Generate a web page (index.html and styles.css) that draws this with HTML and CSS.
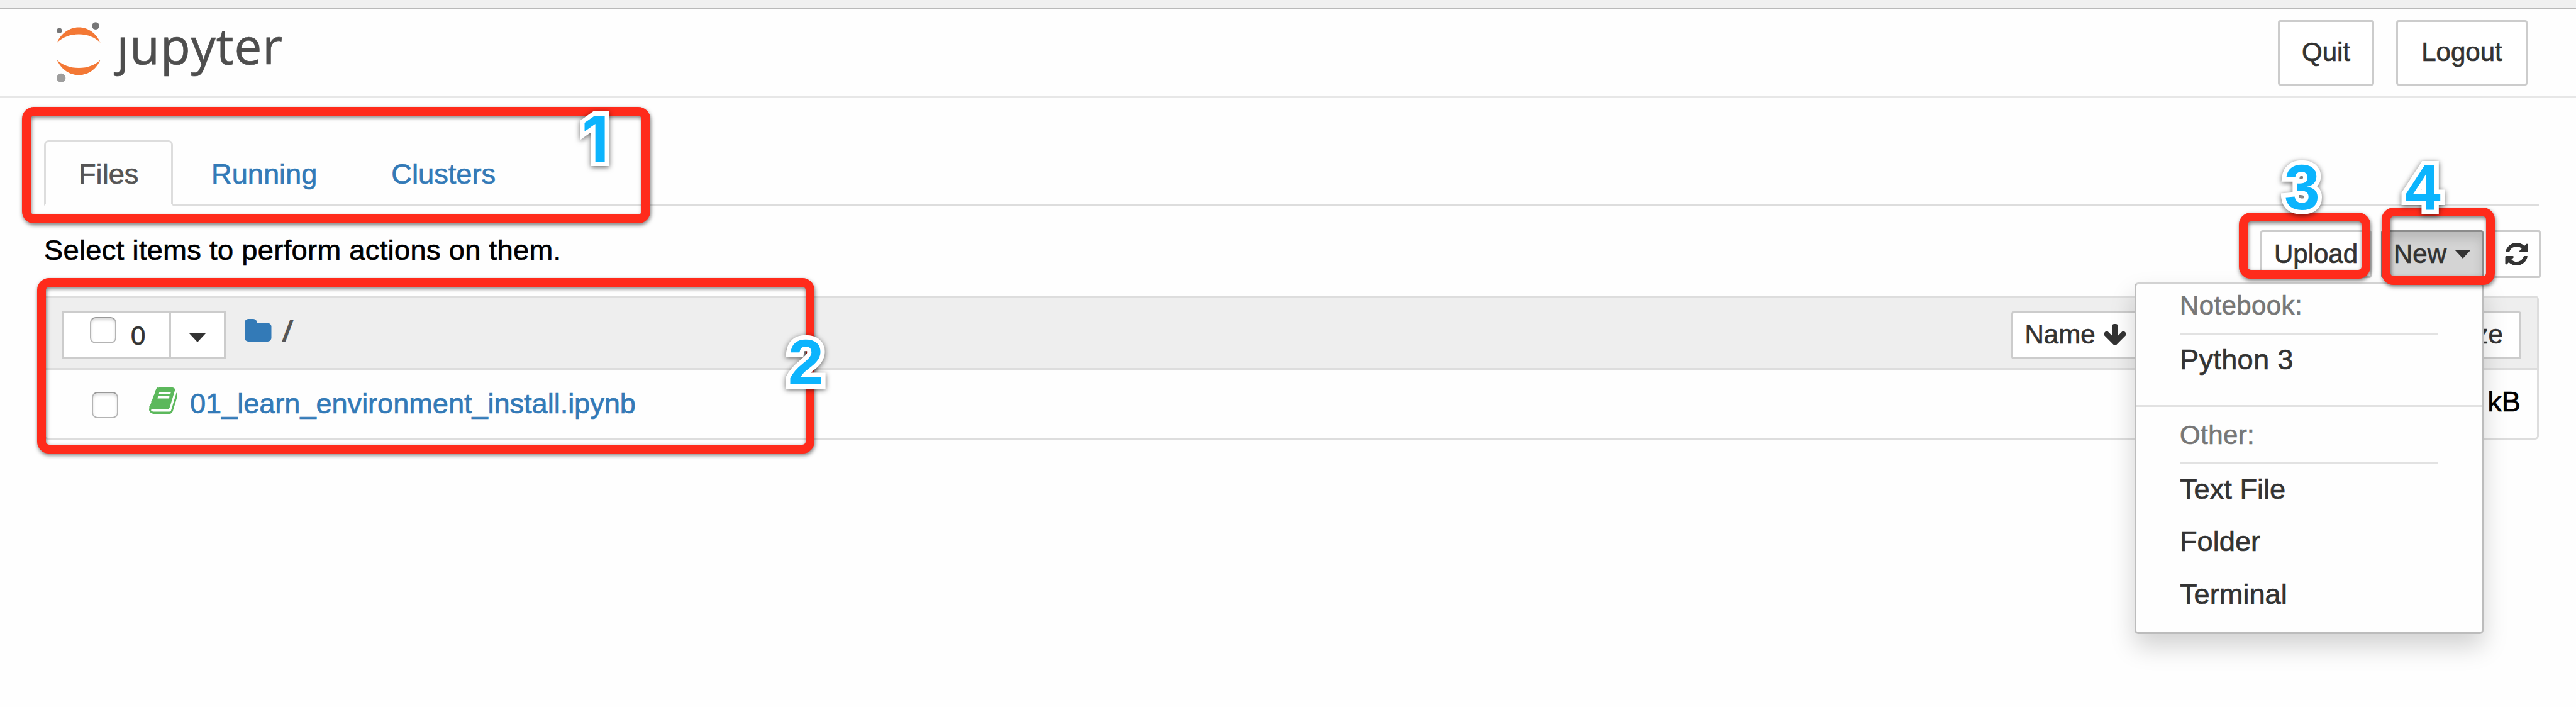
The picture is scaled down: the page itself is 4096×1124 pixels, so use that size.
FILE: index.html
```html
<!DOCTYPE html>
<html lang="en">
<head>
<meta charset="utf-8">
<title>Home</title>
<link rel="stylesheet" href="styles.css">
</head>
<body>
<div class="chrome-edge"></div>
<header class="header">
  <div class="brand">
    <svg class="planet" viewBox="104 40 82 112" aria-hidden="true">
      <path fill="#f37835" d="M104.5 78C112 61 127 49.700 144.500 49.700S177 61 184 78C175 68.500 161 62.500 144.500 62.500S114 68.500 104.500 78Z"/>
      <path fill="#f37835" d="M104.500 109C112 126 127 137 144.500 137S177 126 184 109C175 118.500 161 124 144.500 124S114 118.500 104.500 109Z"/>
      <circle cx="109" cy="55.700" r="4.900" fill="#767677"/>
      <circle cx="175.300" cy="47" r="6.700" fill="#767677"/>
      <circle cx="112.200" cy="142.300" r="8.200" fill="#9e9e9e"/>
    </svg>
    <span class="wordmark"><span class="dotless">j</span>upyter</span>
  </div>
  <div class="session">
    <button class="btn big quit">Quit</button>
    <button class="btn big logout">Logout</button>
  </div>
</header>

<main class="main">
  <nav class="tabs">
    <a class="tab active">Files</a>
    <a class="tab running">Running</a>
    <a class="tab clusters">Clusters</a>
  </nav>

  <div class="toolbar">
    <p class="hint">Select items to perform actions on them.</p>
    <div class="actions">
      <button class="btn upload">Upload</button>
      <button class="btn new">New<i class="caret"></i></button>
      <button class="btn refresh"><svg viewBox="128 128 1536 1536"><path d="M1639 1056q0 5-1 7-64 268-268 434.500t-478 166.500q-146 0-282.500-55t-243.500-157l-129 129q-19 19-45 19t-45-19-19-45v-448q0-26 19-45t45-19h448q26 0 45 19t19 45-19 45l-137 137q71 66 161 102t187 36q134 0 250-65t186-179q11-17 53-117 8-23 30-23h192q13 0 22.500 9.500t9.500 22.500zm25-800v448q0 26-19 45t-45 19h-448q-26 0-45-19t-19-45 19-45l138-138q-148-137-349-137-134 0-250 65t-186 179q-11 17-53 117-8 23-30 23h-199q-13 0-22.500-9.500t-9.500-22.500v-7q65-268 270-434.500t480-166.500q146 0 284 55.500t245 156.500l130-129q19-19 45-19t45 19 19 45z"/></svg></button>
    </div>
  </div>

  <section class="list">
    <div class="list-head">
      <div class="select-group">
        <div class="select-all"><span class="check"></span><span class="count">0</span></div>
        <div class="select-menu"><i class="caret"></i></div>
      </div>
      <svg class="folder" viewBox="64 128 1664 1408"><path d="M1728 608v704q0 92-66 158t-158 66h-1216q-92 0-158-66t-66-158v-960q0-92 66-158t158-66h320q92 0 158 66t66 158v32h672q92 0 158 66t66 158z"/></svg>
      <span class="crumb">/</span>
      <div class="sorters">
        <button class="btn name">Name<svg viewBox="117 128 1558 1483"><path d="M1675 832q0 53-37 90l-651 652q-39 37-91 37-53 0-90-37l-651-652q-38-36-38-90 0-53 38-91l74-75q39-37 91-37 53 0 90 37l294 294v-704q0-52 38-90t90-38h128q52 0 90 38t38 90v704l294-294q37-37 90-37 52 0 91 37l75 75q37 39 37 91z"/></svg></button>
        <button class="btn size">Size</button>
      </div>
    </div>
    <div class="list-row">
      <span class="check"></span>
      <svg class="book" viewBox="64 128 1664 1536"><path d="M1703 478q40 57 18 129l-275 906q-19 64-76.500 107.500t-122.500 43.500h-923q-77 0-148.500-53.500t-99.500-131.500q-24-67-2-127 0-4 3-27t4-37q1-8-3-21.500t-3-19.500q2-11 8-21t16.500-23.500 16.500-23.500q23-38 45-91.500t30-91.500q3-10 .5-30t-.5-28q3-11 17-28t17-23q21-36 42-92t25-90q1-9-2.500-32t.5-28q4-13 22-30.500t22-22.500q19-26 42.500-84.500t27.500-96.500q1-8-3-25.500t-2-26.500q2-8 9-18t18-23 17-21q8-12 16.500-30.500t15-35 16-36 19.500-32 26.500-23.500 36-11.500 47.500 5.500l-1 3q38-9 51-9h761q74 0 114 56t18 130l-274 906q-36 119-71.500 153.500t-128.500 34.500h-869q-27 0-38 15-11 16-1 43 24 70 144 70h923q29 0 56-15.500t35-41.500l300-987q7-22 5-57 38 15 59 43zm-1064 2q-4 13 2 22.500t20 9.500h608q13 0 25.500-9.500t16.500-22.500l21-64q4-13-2-22.500t-20-9.500h-608q-13 0-25.500 9.500t-16.500 22.500zm-83 256q-4 13 2 22.500t20 9.500h608q13 0 25.500-9.500t16.500-22.500l21-64q4-13-2-22.500t-20-9.500h-608q-13 0-25.500 9.500t-16.500 22.500z"/></svg>
      <a class="file">01_learn_environment_install.ipynb</a>
      <span class="filesize">kB</span>
    </div>
  </section>
</main>

<div class="menu">
  <div class="menu-title">Notebook:</div>
  <div class="menu-item kernel">Python 3</div>
  <div class="menu-divider"></div>
  <div class="menu-title">Other:</div>
  <div class="menu-item">Text File</div>
  <div class="menu-item">Folder</div>
  <div class="menu-item">Terminal</div>
</div>

<div class="mark mark-1"></div>
<div class="mark mark-2"></div>
<div class="mark mark-3"></div>
<div class="mark mark-4"></div>
<span class="num num-1">1</span>
<span class="num num-2">2</span>
<span class="num num-3">3</span>
<span class="num num-4">4</span>
</body>
</html>
```
FILE: styles.css
```css
* { box-sizing: border-box; }

body {
  margin: 0;
  position: relative;
  width: 4096px;
  height: 1124px;
  overflow: hidden;
  background: #fefefe;
  color: #000;
  font: 45.2px/64px "Liberation Sans", Arial, sans-serif;
  -webkit-text-stroke: .7px currentColor;
  white-space: nowrap;
}

.chrome-edge { height: 14px; background: #f0f0f0; border-bottom: 2px solid #b9b9b9; }

.header {
  display: flex;
  justify-content: space-between;
  align-items: flex-start;
  height: 142px;
  padding: 18px 77px 0 90px;
  border-bottom: 3px solid #e7e7e7;
}
.brand { display: flex; align-items: flex-start; }
.planet { width: 71.400px; height: 97.400px; margin-top: 3px; }
.wordmark {
  margin: -5px 0 0 24px;
  font: 78px/90px "Open Sans", "Noto Sans", sans-serif;
  color: #4e4e4e;
  letter-spacing: 1px;
}
/* keeps the stem of the j and cuts its dot */
.dotless { display: inline-block; clip-path: inset(27px -20px -20px -20px); }

.session { display: flex; gap: 35px; }

.btn {
  display: flex;
  align-items: center;
  justify-content: center;
  flex: none;
  height: 76px;
  margin: 0;
  padding: 0;
  border: 3px solid #ccc;
  border-radius: 4px;
  background: #fff;
  color: #333;
  font: 42px/60px "Liberation Sans", Arial, sans-serif;
  -webkit-text-stroke: .7px currentColor;
}
.btn svg { display: block; fill: #333; }
.big { height: 104px; padding-bottom: 3px; }
.quit { width: 153px; }
.logout { width: 209px; }

.main { padding: 67px 59px 0 70px; }

.tabs { display: flex; height: 104px; border-bottom: 3px solid #ddd; }
.tab {
  height: 104px;
  padding: 19px 52px 0;
  border: 3px solid transparent;
  margin-right: 6px;
  color: #337ab7;
}
.tab.active {
  width: 205px;
  color: #555;
  background: #fefefe;
  border-color: #ddd #ddd #fefefe;
  border-radius: 7px 7px 0 0;
}
.clusters { margin-left: 2px; }

.toolbar { display: flex; justify-content: space-between; height: 143px; padding-top: 39px; margin-right: -3px; }
.hint { margin: 0; letter-spacing: .34px; }
.actions { display: flex; }
.upload { width: 177px; }
.new {
  width: 163px;
  margin-left: 15px;
  gap: 13px;
  background: #d4d4d4;
  border-color: #8c8c8c;
  box-shadow: inset 0 10px 16px rgba(0, 0, 0, .125);
}
.refresh { width: 78px; margin-left: 13px; }
.refresh svg { width: 37px; height: 36px; }

.caret { border: 13.500px solid transparent; border-top: 14px solid #333; border-bottom: 0; }

.list { border: 3px solid #ddd; border-radius: 6px; }
.list-head {
  display: flex;
  align-items: flex-start;
  height: 115px;
  padding: 22px 25px 0 25px;
  background: #eee;
  border-bottom: 3px solid #ddd;
}
.select-group {
  display: flex;
  width: 261px;
  height: 76px;
  border: 3px solid #ccc;
  background: #fff;
  color: #333;
  font-size: 42px;
}
.select-all { display: flex; width: 171px; padding: 6px 0 0 42px; border-right: 3px solid #ccc; gap: 23px; }
.count { line-height: 60px; }
.select-menu { flex: 1; display: flex; justify-content: center; padding-top: 32px; }
.check {
  flex: none;
  width: 42px;
  height: 42px;
  border: 2px solid #b4b4b4;
  border-top-color: #999;
  border-radius: 9px;
  background: #fff;
  box-shadow: inset 0 3px 4px rgba(0, 0, 0, .14);
}
.folder { width: 42.500px; height: 36px; margin: 12px 0 0 30px; fill: #337ab7; }
.crumb {
  margin-left: 19px;
  color: #555;
  -webkit-text-stroke-width: 2px;
  transform: skewX(-6deg);
}
.sorters { display: flex; justify-content: space-between; width: 811px; margin-left: auto; }
.sorters .btn { padding-bottom: 2px; }
.name { width: 204px; gap: 13px; }
.name svg { width: 36px; height: 34px; }
.size { width: 140px; }

.list-row { display: flex; align-items: flex-start; height: 108px; padding: 19px 26px 0 73px; }
.list-row .check { margin-top: 16px; }
.book { width: 45.500px; height: 42px; margin: 9px 0 0 48.500px; fill: #5cb85c; }
.file { margin: 3px 0 0 20px; color: #337ab7; letter-spacing: -.06px; }
.filesize { margin-left: auto; }

.menu {
  position: absolute;
  left: 3394px;
  top: 449px;
  width: 555px;
  height: 559px;
  padding-top: 15px;
  border: 3px solid #bcbcbc;
  border-top-color: #d2d2d2;
  border-radius: 6px;
  background: #fefefe;
  box-shadow: 0 20px 39px rgba(0, 0, 0, .175);
  color: #333;
}
.menu-title {
  height: 65px;
  margin: 0 70px 0 69px;
  border-bottom: 3px solid #e2e2e2;
  color: #777;
  font-size: 42px;
  line-height: 38px;
  letter-spacing: .4px;
}
.menu-item { height: 83.500px; padding: 8px 0 0 69px; }
.kernel { letter-spacing: .3px; }
.menu-divider { height: 3px; margin: 28px 0 26px; background: #e2e2e2; }

.mark {
  position: absolute;
  border: 14px solid #ff2b1b;
  border-radius: 19px;
  filter: drop-shadow(1px 3px 3px rgba(0, 0, 0, .5));
}
.mark-1 { left: 35px; top: 170px; width: 999px; height: 185px; }
.mark-2 { left: 59px; top: 442px; width: 1236px; height: 279px; }
.mark-3 { left: 3560px; top: 338px; width: 209px; height: 105px; }
.mark-4 { left: 3787px; top: 330px; width: 180px; height: 123px; }

.num {
  position: absolute;
  font: bold 102px/100px "Liberation Sans", Arial, sans-serif;
  color: #0cb4fd;
  -webkit-text-stroke: 14px #fff;
  paint-order: stroke fill;
  stroke-linejoin: round;
  filter: drop-shadow(0 2px 4px rgba(0, 0, 0, .6));
}
.num-1 { left: 925px; top: 171px; font-family: Inter, "Open Sans", sans-serif; font-size: 100px; }
.num-2 { left: 1253px; top: 526px; }
.num-3 { left: 3632px; top: 248px; }
.num-4 { left: 3824px; top: 248px; }
```
